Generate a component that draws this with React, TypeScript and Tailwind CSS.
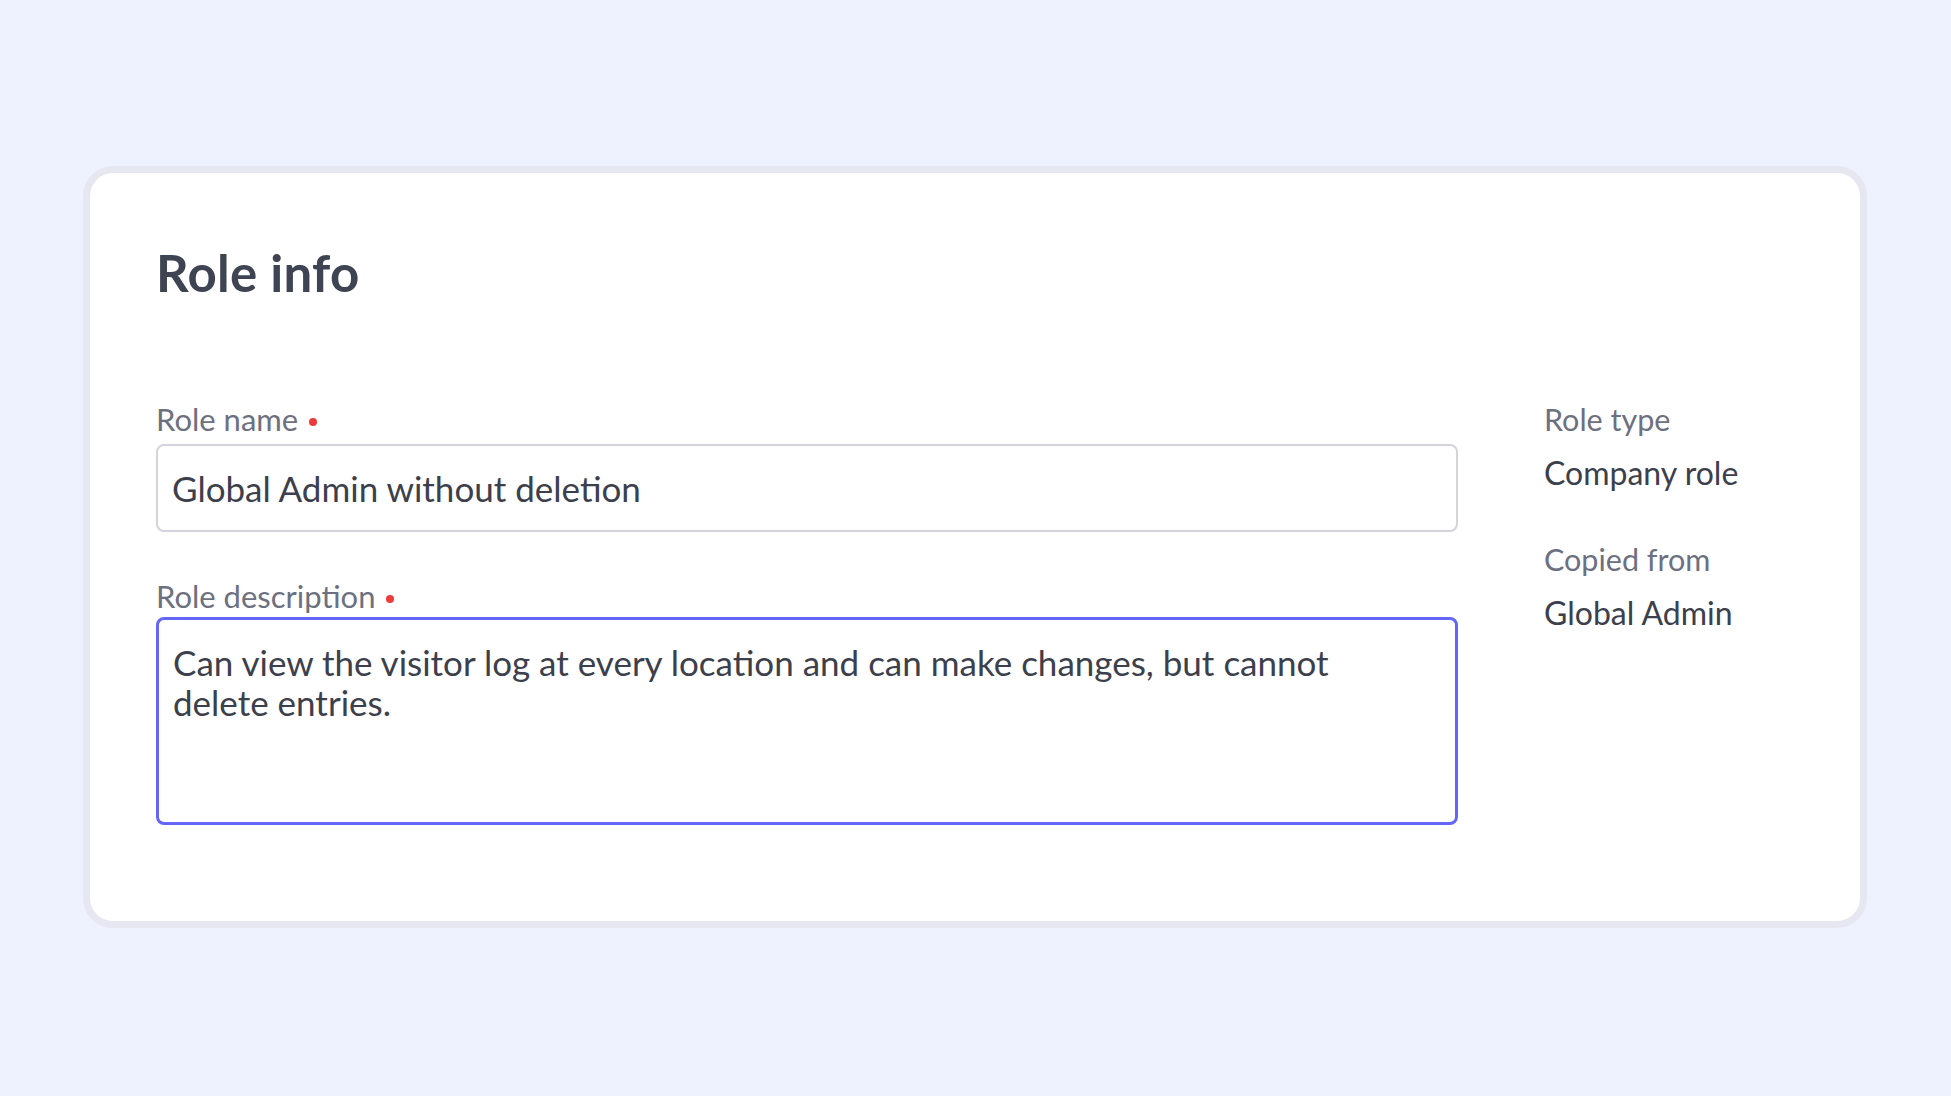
import React from "react";

const font = { fontFamily: '"Lato", "Noto Sans", sans-serif' };

function Dot() {
  return <span className="ml-[11px] mt-[6px] inline-block h-[8px] w-[8px] rounded-full bg-[#f03a3a]" />;
}

export default function App() {
  return (
    <div className="min-h-screen w-full bg-[#eef2fe] pt-[166px] pl-[83px]" style={font}>
      <div className="w-[1784px] h-[762px] rounded-[30px] border-[7px] border-[#e6e7f0] bg-white pl-[66px] pr-[60px]">
        <h1 className="mt-[70px] text-[51px] leading-[60px] font-bold text-[#3f4452] tracking-[0.3px]">Role info</h1>
        <div className="mt-[99px] flex gap-[86px]">
          <div className="w-[1302px] flex flex-col">
            <label className="flex items-center text-[31px] leading-[34px] text-[#6c7080]">
              Role name
              <Dot />
            </label>
            <div className="mt-[8px] h-[88px] rounded-[8px] border-[2px] border-[#d3d4dc] flex items-center px-[14px] text-[35px] text-[#3c404c]">
              Global Admin without deletion
            </div>
            <label className="mt-[47px] flex items-center text-[31px] leading-[34px] text-[#6c7080]">
              Role description
              <Dot />
            </label>
            <div className="mt-[4px] h-[208px] rounded-[8px] border-[3px] border-[#6466f7] pl-[14px] pr-[60px] pt-[22px] text-[35px] leading-[40px] text-[#3c404c]">
              Can view the visitor log at every location and can make changes, but cannot delete entries.
            </div>
          </div>
          <div className="flex flex-col">
            <div className="text-[30.5px] leading-[34px] text-[#6c7080]">Role type</div>
            <div className="mt-[20px] text-[32px] leading-[34px] text-[#3c404c]">Company role</div>
            <div className="mt-[52px] text-[30.5px] leading-[34px] text-[#6c7080]">Copied from</div>
            <div className="mt-[20px] text-[32px] leading-[34px] text-[#3c404c]">Global Admin</div>
          </div>
        </div>
      </div>
    </div>
  );
}
